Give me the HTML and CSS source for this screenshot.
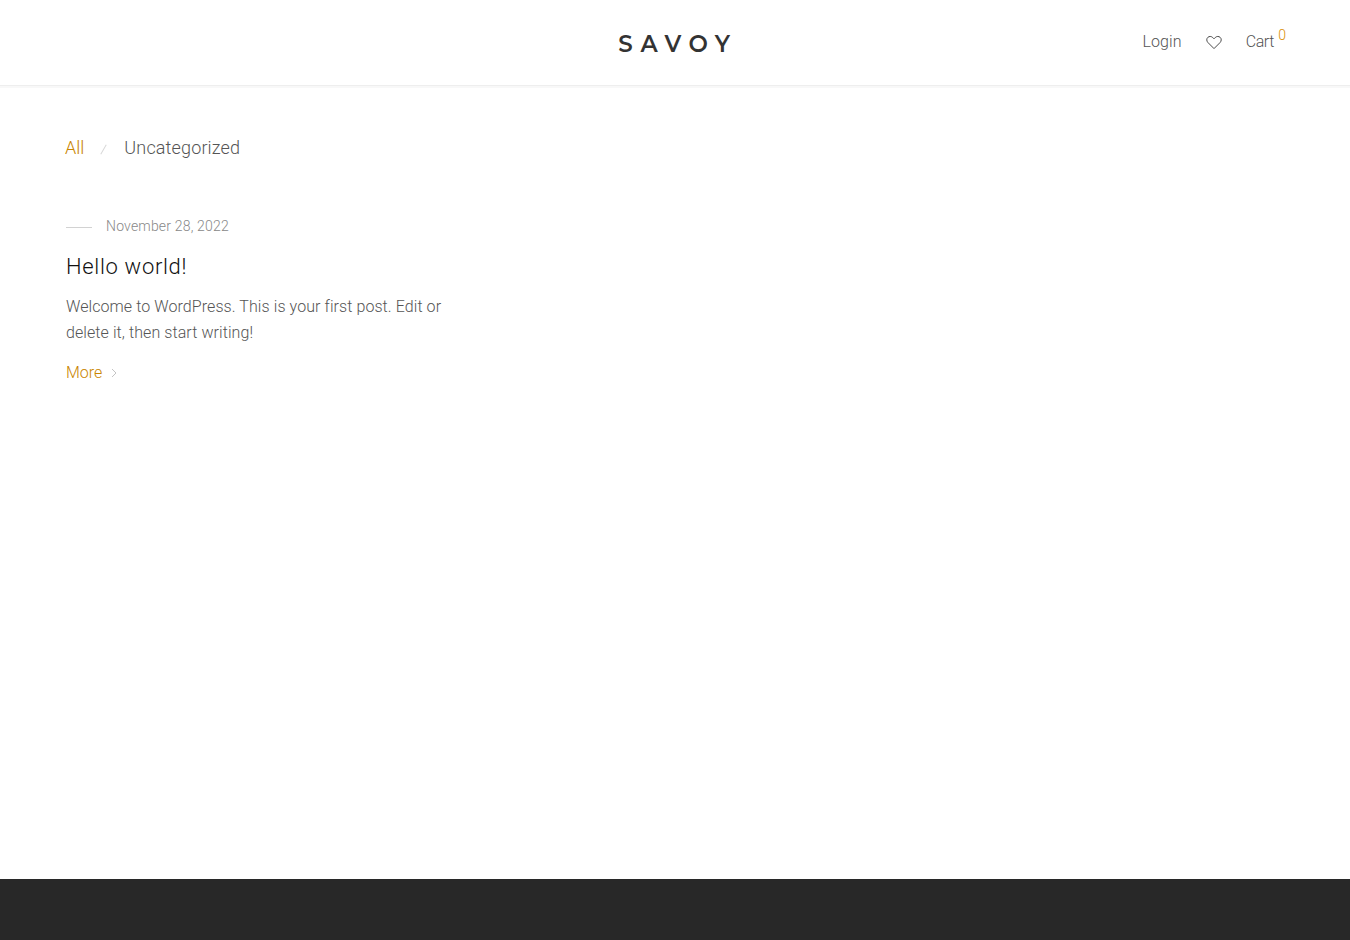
FILE: index.html
```html
<!DOCTYPE html>
<html lang="en">
<head>
    <meta charset="UTF-8">
    <title>Savoy</title>
    <link rel="stylesheet" href="styles.css">
</head>
<body>
    <header class="site-header">
        <div class="header-spacer"></div>
        <a href="#" class="logo">SAVOY</a>
        <nav class="header-nav">
            <a href="#" class="nav-link login-link">Login</a>
            <a href="#" class="nav-heart">
                <svg width="16" height="15" viewBox="0 0 16 15" fill="none" stroke="#4a4a4a" stroke-width="1">
                    <path d="M8 13.6 L2 7.6 C0.4 6 0.4 3.7 1.8 2.4 C3.2 1.1 5.3 1.2 6.6 2.4 L8 3.8 L9.4 2.4 C10.7 1.2 12.8 1.1 14.2 2.4 C15.6 3.7 15.6 6 14 7.6 Z"/>
                </svg>
            </a>
            <a href="#" class="nav-link cart-link"><span class="cart-label">Cart</span><span class="cart-count">0</span></a>
        </nav>
    </header>

    <main class="blog-main">
        <ul class="category-list">
            <li><a href="#" class="category-active">All</a></li>
            <li class="category-sep"></li>
            <li><a href="#" class="category-link">Uncategorized</a></li>
        </ul>

        <article class="post">
            <div class="post-date"><span class="date-line"></span>November 28, 2022</div>
            <h2 class="post-title">Hello world!</h2>
            <p class="post-excerpt">Welcome to WordPress. This is your first post. Edit or delete it, then start writing!</p>
            <a href="#" class="post-more">More
                <svg width="6" height="10" viewBox="0 0 6 10" fill="none" stroke="#c4c4c4" stroke-width="1">
                    <path d="M1 1 L5 5 L1 9"/>
                </svg>
            </a>
        </article>
    </main>

    <footer class="site-footer"></footer>
</body>
</html>
```

FILE: styles.css
```css
body {
    margin: 0;
    padding: 0;
    font-family: Roboto, "Liberation Sans", sans-serif;
    font-weight: 300;
    background: #fff;
    color: #777;
    height: 940px;
    overflow: hidden;
    display: flex;
    flex-direction: column;
}

a {
    text-decoration: none;
}

.site-header {
    height: 86px;
    box-sizing: border-box;
    padding: 0 64px 0 66px;
    display: flex;
    align-items: center;
    border-bottom: 1px solid #eee;
    box-shadow: 0 2px 0 #f8f8f8;
    flex-shrink: 0;
}

.header-spacer {
    flex: 1;
}

.logo {
    font-family: Montserrat, Inter, "Open Sans", sans-serif;
    font-size: 23px;
    font-weight: 600;
    letter-spacing: 7.7px;
    margin-right: -4px;
    color: #333;
    position: relative;
    top: 1px;
}

.header-nav {
    flex: 1;
    display: flex;
    justify-content: flex-end;
    align-items: center;
    gap: 24px;
    font-size: 16px;
    margin-top: -2px;
}

.nav-link {
    color: #555;
}

.login-link {
    letter-spacing: 0.1px;
}

.nav-heart {
    display: flex;
    margin-top: 1px;
}

.cart-link {
    position: relative;
    padding-right: 12px;
}

.cart-label {
    letter-spacing: -0.4px;
}

.cart-count {
    position: absolute;
    top: -5px;
    right: 0;
    font-size: 14px;
    color: #d98e04;
}

.blog-main {
    flex: 1;
    padding: 49px 66px 0;
}

.category-list {
    list-style: none;
    margin: 0 0 0 -1px;
    padding: 0;
    display: flex;
    align-items: center;
    font-size: 18px;
    line-height: 26px;
}

.category-active {
    color: #c98500;
}

.category-link {
    color: #555;
    letter-spacing: 0.15px;
}

.category-sep {
    width: 1px;
    height: 11px;
    margin: 3px 20px 0 19px;
    background: #d8d8d8;
    transform: rotate(30deg);
}

.post {
    width: 400px;
    margin-top: 55px;
}

.post-date {
    display: flex;
    align-items: center;
    font-size: 14px;
    line-height: 20px;
    color: #888;
    letter-spacing: 0.18px;
}

.date-line {
    width: 26px;
    height: 1px;
    margin: 2px 14px 0 0;
    background: #d2d2d2;
}

.post-title {
    margin: 16px 0 0;
    font-size: 22px;
    font-weight: 300;
    line-height: 30px;
    letter-spacing: 0.68px;
    color: #111;
}

.post-excerpt {
    margin: 12px 0 0;
    font-size: 16px;
    line-height: 26px;
    letter-spacing: 0.08px;
    color: #555;
}

.post-more {
    display: inline-flex;
    align-items: center;
    gap: 9px;
    margin-top: 14px;
    font-size: 16px;
    line-height: 26px;
    color: #c98500;
}

.site-footer {
    height: 61px;
    background: #282828;
    flex-shrink: 0;
}
```
